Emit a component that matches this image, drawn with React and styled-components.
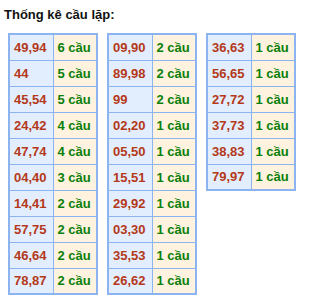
import React from 'react';
import styled, { createGlobalStyle } from 'styled-components';

const GlobalStyle = createGlobalStyle`
  body {
    margin: 0;
    background: #ffffff;
    font-family: "Liberation Sans", Arial, sans-serif;
  }
`;

const Wrap = styled.div`
  padding: 7px 0 0 4px;
`;

const Title = styled.div`
  font-size: 13px;
  font-weight: bold;
  color: #111111;
  line-height: 16px;
`;

const Tables = styled.div`
  display: flex;
  align-items: flex-start;
  gap: 9px;
  margin: 10px 0 0 4px;
`;

const Table = styled.table`
  border-collapse: collapse;
  border: 2px solid #8cb4f0;
`;

const Cell = styled.td`
  box-sizing: border-box;
  height: 26px;
  width: ${p => p.w}px;
  padding: 0 0 0 4px;
  border: 1px solid #8cb4f0;
  background: ${p => (p.cau ? '#fff2de' : '#e2eefd')};
  color: ${p => (p.cau ? '#0a7f0a' : '#b4381a')};
  font-size: 13px;
  font-weight: bold;
  white-space: nowrap;
`;

const cols = [
  [['49,94', 6], ['44', 5], ['45,54', 5], ['24,42', 4], ['47,74', 4], ['04,40', 3], ['14,41', 2], ['57,75', 2], ['46,64', 2], ['78,87', 2]],
  [['09,90', 2], ['89,98', 2], ['99', 2], ['02,20', 1], ['05,50', 1], ['15,51', 1], ['29,92', 1], ['03,30', 1], ['35,53', 1], ['26,62', 1]],
  [['36,63', 1], ['56,65', 1], ['27,72', 1], ['37,73', 1], ['38,83', 1], ['79,97', 1]],
];

export default function App() {
  return (
    <Wrap>
      <GlobalStyle />
      <Title>Thống kê cầu lặp:</Title>
      <Tables>
        {cols.map((rows, i) => (
          <Table key={i}>
            <tbody>
              {rows.map(([num, n]) => (
                <tr key={num}>
                  <Cell w={44}>{num}</Cell>
                  <Cell cau w={44}>{n} cầu</Cell>
                </tr>
              ))}
            </tbody>
          </Table>
        ))}
      </Tables>
    </Wrap>
  );
}
